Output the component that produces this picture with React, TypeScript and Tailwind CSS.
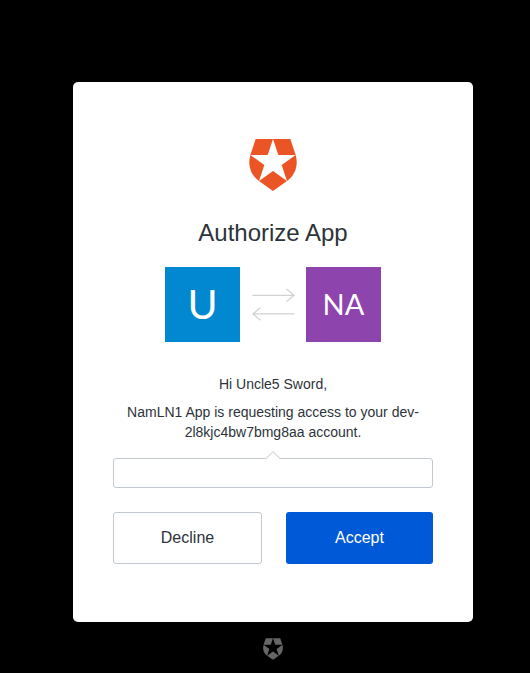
import React from "react";

function Shield({ className }: { className: string }) {
  return (
    <svg viewBox="0 0 144 156" className={className} fill="currentColor" aria-hidden="true">
      <path d="M20 0H72L56 48H4Z" />
      <path d="M72 0H124L140 48H88Z" />
      <path d="M4 48L46 78L30 126C6 109-5 80 4 48Z" />
      <path d="M140 48L98 78L114 126C138 109 149 80 140 48Z" />
      <path d="M30 126L72 96L114 126L72 156Z" />
    </svg>
  );
}

function Exchange() {
  return (
    <svg
      viewBox="0 0 42 32"
      className="h-8 w-[42px] overflow-visible text-[#d0d2d3]"
      fill="none"
      stroke="currentColor"
      strokeWidth="1.25"
      aria-hidden="true"
    >
      <path d="M0.500 6.300H42M34.500 0L42 6.300L34.500 12.600" />
      <path d="M42.500 24.900H1M8.500 18.600L1 24.900L8.500 31.200" />
    </svg>
  );
}

export default function App() {
  return (
    <div className="min-h-screen bg-black pt-[82px] pl-4 font-['Liberation_Sans',Arial,sans-serif] text-[#2d333a]">
      <main className="mx-auto flex w-full max-w-[400px] flex-col items-center rounded-[5px] bg-white px-10 pt-[57px] pb-[58px]">
        <Shield className="h-[52px] w-12 text-[#eb5424]" />
        <h1 className="mt-6 text-2xl leading-9">Authorize App</h1>

        <div className="mt-4 flex items-center gap-3">
          <div className="flex size-[75px] items-center justify-center bg-[#0288d1] pb-0.5 font-[Lato,sans-serif] text-[41px] leading-none text-white">
            U
          </div>
          <Exchange />
          <div className="flex size-[75px] items-center justify-center bg-[#8e44ad] pb-0.5 font-[Lato,sans-serif] text-[29px] leading-none text-white">
            NA
          </div>
        </div>

        <div className="mt-8 space-y-2 text-center text-sm leading-5">
          <p>Hi Uncle5 Sword,</p>
          <p>NamLN1 App is requesting access to your dev-2l8kjc4bw7bmg8aa account.</p>
        </div>

        <div className="relative mt-4 h-[30px] w-full rounded-[3px] border border-[#c2c8d0]">
          <svg
            viewBox="0 0 16 9"
            className="absolute -top-2 left-1/2 h-[9px] w-4 -translate-x-1/2"
            aria-hidden="true"
          >
            <path d="M1 7H15V9H1Z" fill="white" />
            <path d="M0.500 8L8 0.800L15.500 8" fill="white" stroke="#d9dce1" strokeWidth="1.25" />
          </svg>
        </div>

        <form className="mt-6 flex w-full gap-6" onSubmit={(e) => e.preventDefault()}>
          <button
            type="submit"
            className="h-[52px] flex-1 rounded-[3px] border border-[#c2c8d0] bg-white"
          >
            Decline
          </button>
          <button type="submit" className="h-[52px] flex-1 rounded-[3px] bg-[#0059d6] text-white">
            Accept
          </button>
        </form>
      </main>
      <footer className="flex justify-center pt-4 pb-3">
        <Shield className="h-[22px] w-5 text-[#666666]" />
      </footer>
    </div>
  );
}
